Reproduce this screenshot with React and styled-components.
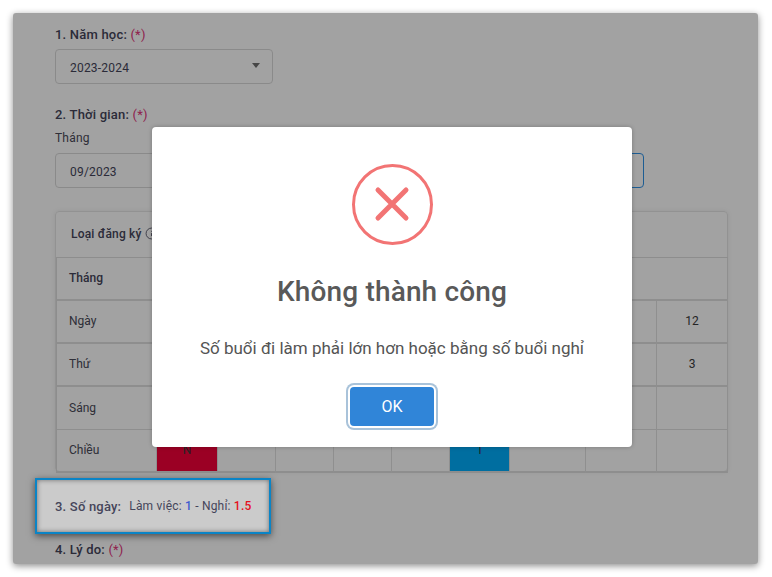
import styled, { createGlobalStyle } from "styled-components";
import { Info } from "lucide-react";

const GlobalStyle = createGlobalStyle`
    html, body {
        margin: 0;
        background: #FFFFFF;
    }
    * {
        box-sizing: border-box;
    }
`

export default function App(){
    return(
        <Page>
            <GlobalStyle />
            <Panel>
                <Label>1. Năm học: <Required>(*)</Required></Label>
                <Select>
                    2023-2024
                    <Caret />
                </Select>

                <Label $top={23}>2. Thời gian: <Required>(*)</Required></Label>
                <Fields>
                    <Field>
                        <SmallLabel>Tháng</SmallLabel>
                        <Input>09/2023</Input>
                    </Field>
                    <Field>
                        <SmallLabel>&nbsp;</SmallLabel>
                        <Input $active />
                    </Field>
                </Fields>

                <Card>
                    <CardHeader>
                        Loại đăng ký
                        <Info size={13} strokeWidth={1.5} />
                    </CardHeader>
                    <Grid>
                        <TitleCell $strong>Tháng</TitleCell>
                        <MonthCell />

                        <TitleCell>Ngày</TitleCell>
                        <Cell /><Cell /><Cell /><Cell /><Cell /><Cell /><Cell /><Cell />
                        <Cell>12</Cell>

                        <TitleCell>Thứ</TitleCell>
                        <Cell /><Cell /><Cell /><Cell /><Cell /><Cell /><Cell /><Cell />
                        <Cell>3</Cell>

                        <TitleCell $thin>Sáng</TitleCell>
                        <Cell $thin /><Cell $thin /><Cell $thin /><Cell $thin /><Cell $thin />
                        <Cell $thin /><Cell $thin /><Cell $thin /><Cell $thin />

                        <TitleCell>Chiều</TitleCell>
                        <Cell $fill="#F40039">N</Cell>
                        <Cell /><Cell /><Cell /><Cell />
                        <Cell $fill="#00AEFC">1</Cell>
                        <Cell /><Cell /><Cell />
                    </Grid>
                </Card>

                <Highlight>
                    <strong>3. Số ngày:</strong>
                    <DayCount>
                        Làm việc: <Work>1</Work> - Nghỉ: <Off>1.5</Off>
                    </DayCount>
                </Highlight>

                <Label $top={8}>4. Lý do: <Required>(*)</Required></Label>

                <Overlay>
                    <Modal>
                        <ErrorIcon viewBox="0 0 82 82">
                            <circle cx="40.5" cy="40.5" r="39" fill="none" stroke="#F27474" strokeWidth="3" />
                            <path d="M26 26 L54 54 M54 26 L26 54" fill="none" stroke="#F27474" strokeWidth="5" strokeLinecap="round" />
                        </ErrorIcon>
                        <ModalTitle>Không thành công</ModalTitle>
                        <ModalText>Số buổi đi làm phải lớn hơn hoặc bằng số buổi nghỉ</ModalText>
                        <OkButton type="button">OK</OkButton>
                    </Modal>
                </Overlay>
            </Panel>
        </Page>
    )
}

const Page = styled.main`
    width: 772px;
    height: 577px;
    padding: 13px 14px 13px 13px;
    overflow: hidden;
    font-family: Roboto, "Liberation Sans", sans-serif;
`

const Panel = styled.section`
    position: relative;
    width: 745px;
    height: 551px;
    padding: 14px 31px 0 42px;
    overflow: hidden;
    background: #FFFFFF;
    border-radius: 3px;
    box-shadow: 0 2px 7px rgba(0, 0, 0, 0.45);
    color: #45455A;
`

const Label = styled.div`
    margin-top: ${props => props.$top || 0}px;
    height: 16px;
    line-height: 16px;
    font-size: 13px;
    font-weight: 500;
    letter-spacing: 0.2px;
`

const Required = styled.span`
    color: #E2357A;
    font-weight: 400;
`

const Select = styled.div`
    position: relative;
    display: flex;
    align-items: center;
    width: 218px;
    height: 35px;
    margin-top: 6px;
    padding: 2px 14px 0;
    border: 1px solid #D9D9D9;
    border-radius: 4px;
    font-size: 12px;
    letter-spacing: 0.2px;
`

const Caret = styled.span`
    position: absolute;
    right: 12px;
    top: 13px;
    border-left: 4px solid transparent;
    border-right: 4px solid transparent;
    border-top: 5px solid #6F6F6F;
`

const Fields = styled.div`
    display: flex;
    gap: 10px;
    width: 589px;
    margin-top: 8px;
`

const Field = styled.div`
    flex: 1;
`

const SmallLabel = styled.div`
    height: 15px;
    line-height: 15px;
    font-size: 12px;
    letter-spacing: 0.2px;
    color: #4A4A58;
`

const Input = styled.div`
    display: flex;
    align-items: center;
    height: 35px;
    margin-top: 7px;
    padding: 2px 14px 0;
    border: 1px solid ${props => props.$active ? "#2F93E8" : "#D9D9D9"};
    border-radius: 4px;
    font-size: 12px;
    letter-spacing: 0.2px;
`

const Card = styled.div`
    width: 673px;
    height: 261px;
    margin-top: 23px;
    border: 1px solid #E6E6E6;
    border-radius: 4px;
    box-shadow: 0 0 5px rgba(0, 0, 0, 0.08);
`

const CardHeader = styled.div`
    display: flex;
    align-items: center;
    gap: 3px;
    height: 45px;
    padding: 0 0 2px 15px;
    font-size: 12px;
    font-weight: 500;
    letter-spacing: 0.2px;
`

const Grid = styled.div`
    display: grid;
    grid-template-columns: 100px 61px 58px 58px 58px 58px 60px 76px 71px 71px;
    grid-auto-rows: 43px;
    width: 672px;
    border-top: 1px solid #DEDEDE;
    border-left: 1px solid #DEDEDE;
`

const Cell = styled.div`
    display: flex;
    align-items: center;
    justify-content: center;
    padding-bottom: 1px;
    border-right: 1px solid #E2E2E2;
    border-bottom: ${props => props.$thin ? "1px" : "2px"} solid #E0E0E0;
    background: ${props => props.$fill || "transparent"};
    font-size: 12px;
    color: #3A3A3A;
`

const TitleCell = styled(Cell)`
    justify-content: flex-start;
    padding-left: 12px;
    font-weight: ${props => props.$strong ? 500 : 400};
    color: ${props => props.$strong ? "#45455A" : "#4A4A58"};
`

const MonthCell = styled(Cell)`
    grid-column: span 9;
`

const Highlight = styled.div`
    position: relative;
    z-index: 2;
    display: flex;
    align-items: center;
    gap: 8px;
    width: 236px;
    height: 56px;
    margin: 6px 0 0 -20px;
    padding-left: 18px;
    border: 2px solid #0A84C6;
    background: #CBCBCB;
    box-shadow: 0 2px 7px rgba(0, 0, 0, 0.55), inset 0 0 5px rgba(0, 0, 0, 0.45);
    font-size: 13px;
    letter-spacing: 0.2px;

    strong {
        font-weight: 500;
    }
`

const DayCount = styled.span`
    font-size: 12px;
`

const Work = styled.span`
    color: #3F5BD0;
    font-weight: 500;
`

const Off = styled.span`
    color: #E5101E;
    font-weight: 500;
`

const Overlay = styled.div`
    position: absolute;
    inset: 0;
    z-index: 1;
    padding: 114px 0 0 139px;
    background: rgba(0, 0, 0, 0.365);
`

const Modal = styled.div`
    display: flex;
    flex-direction: column;
    align-items: center;
    width: 480px;
    height: 320px;
    padding-top: 37px;
    background: #FFFFFF;
    border-radius: 4px;
    box-shadow: 0 0 4px rgba(0, 0, 0, 0.25);
`

const ErrorIcon = styled.svg`
    width: 82px;
    height: 82px;
    margin-left: 2px;
`

const ModalTitle = styled.h2`
    margin: 28px 0 0;
    line-height: 36px;
    font-size: 28px;
    font-weight: 500;
    letter-spacing: 0.15px;
    color: #595959;
`

const ModalText = styled.p`
    margin: 27px 0 0;
    line-height: 22px;
    font-size: 17px;
    font-weight: 400;
    color: #545454;
`

const OkButton = styled.button`
    width: 84px;
    height: 39px;
    margin-top: 28px;
    border: none;
    border-radius: 4px;
    background: #3085D8;
    box-shadow: 0 0 0 2px #FFFFFF, 0 0 0 4px #A9C3DA;
    font-family: inherit;
    font-size: 16px;
    color: #FFFFFF;
    cursor: pointer;
`
